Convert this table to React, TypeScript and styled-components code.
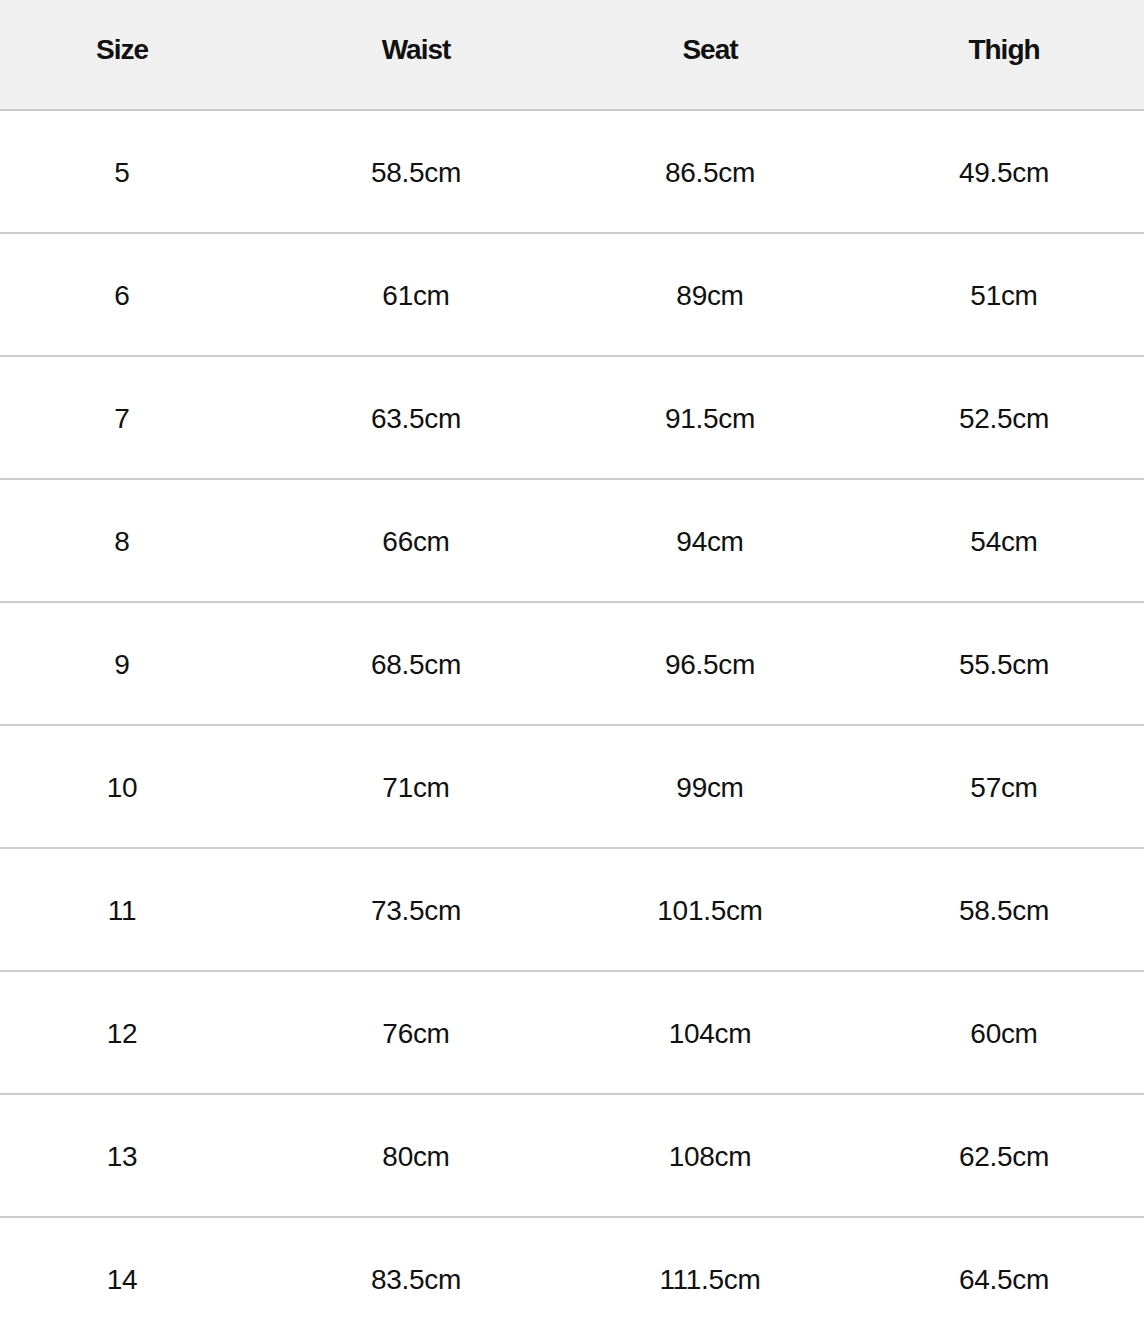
import React from "react";
import styled, { createGlobalStyle } from "styled-components";

const GlobalStyle = createGlobalStyle`
  html, body {
    margin: 0;
    padding: 0;
    background: #ffffff;
  }
  body {
    font-family: "Liberation Sans", Arial, Helvetica, sans-serif;
    color: #111111;
    overflow: hidden;
  }
`;

const Table = styled.div`
  width: 1144px;
  display: flex;
  flex-direction: column;
`;

const Row = styled.div<{ $header?: boolean }>`
  display: grid;
  grid-template-columns: repeat(4, 244px);
  column-gap: 50px;
  align-items: center;
  box-sizing: content-box;
  height: ${(p) => (p.$header ? "99px" : "119px")};
  padding: ${(p) => (p.$header ? "0 0 10px" : "2px 0 0")};
  background: ${(p) => (p.$header ? "#f0f0f0" : "#ffffff")};
  border-bottom: 2px solid #cccccc;
`;

const Cell = styled.div<{ $header?: boolean }>`
  text-align: center;
  font-size: 28px;
  line-height: 32px;
  font-weight: ${(p) => (p.$header ? 700 : 400)};
  letter-spacing: ${(p) => (p.$header ? "-1px" : "-0.3px")};
  color: #111111;
  white-space: nowrap;
`;

const headers = ["Size", "Waist", "Seat", "Thigh"];

const rows: string[][] = [
  ["5", "58.5cm", "86.5cm", "49.5cm"],
  ["6", "61cm", "89cm", "51cm"],
  ["7", "63.5cm", "91.5cm", "52.5cm"],
  ["8", "66cm", "94cm", "54cm"],
  ["9", "68.5cm", "96.5cm", "55.5cm"],
  ["10", "71cm", "99cm", "57cm"],
  ["11", "73.5cm", "101.5cm", "58.5cm"],
  ["12", "76cm", "104cm", "60cm"],
  ["13", "80cm", "108cm", "62.5cm"],
  ["14", "83.5cm", "111.5cm", "64.5cm"],
];

export default function App() {
  return (
    <>
      <GlobalStyle />
      <Table>
        <Row $header>
          {headers.map((h) => (
            <Cell key={h} $header>
              {h}
            </Cell>
          ))}
        </Row>
        {rows.map((r) => (
          <Row key={r[0]}>
            {r.map((c, i) => (
              <Cell key={i}>{c}</Cell>
            ))}
          </Row>
        ))}
      </Table>
    </>
  );
}
